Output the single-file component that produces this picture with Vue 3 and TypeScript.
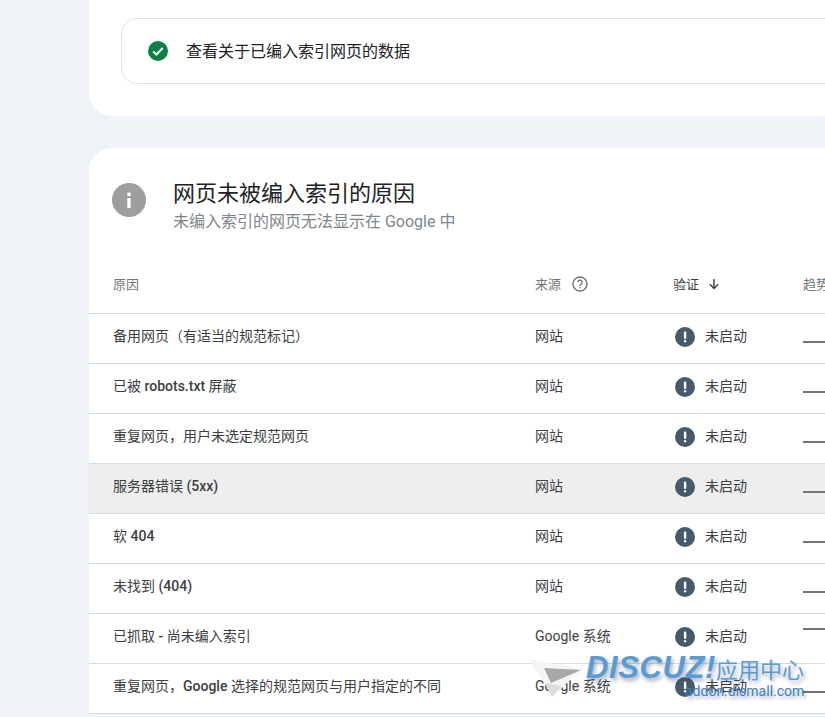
<script setup lang="ts">
interface Row {
  reason: string
  source: string
  trendTop: number
  hover?: boolean
}
const rows: Row[] = [
  { reason: '备用网页（有适当的规范标记）', source: '网站', trendTop: 27 },
  { reason: '已被 robots.txt 屏蔽', source: '网站', trendTop: 27 },
  { reason: '重复网页，用户未选定规范网页', source: '网站', trendTop: 27 },
  { reason: '服务器错误 (5xx)', source: '网站', trendTop: 27, hover: true },
  { reason: '软 404', source: '网站', trendTop: 27 },
  { reason: '未找到 (404)', source: '网站', trendTop: 27 },
  { reason: '已抓取 - 尚未编入索引', source: 'Google 系统', trendTop: 14 },
  { reason: '重复网页，Google 选择的规范网页与用户指定的不同', source: 'Google 系统', trendTop: 27 },
]

/* Latin runs are set in medium weight, CJK runs stay regular. */
function segments(text: string): { text: string; latin: boolean }[] {
  return (text.match(/[\x20-\x7e]+|[^\x20-\x7e]+/g) ?? []).map((part) => ({
    text: part,
    latin: /^[\x20-\x7e]/.test(part),
  }))
}
</script>

<template>
  <div class="page">
    <main class="content">
      <section class="card top-card">
        <div class="link-box">
          <svg class="check" viewBox="0 0 20 20" width="20" height="20">
            <circle cx="10" cy="10" r="10" fill="#0b8043" />
            <path d="M5.2 10.4l3.2 3.1 6.4-6.6" fill="none" stroke="#fff" stroke-width="2.1" />
          </svg>
          <span class="link-text">查看关于已编入索引网页的数据</span>
        </div>
      </section>

      <section class="card table-card">
        <header class="head">
          <svg class="info" viewBox="0 0 34 34" width="34" height="34">
            <circle cx="17" cy="17" r="17" fill="#9e9e9e" />
            <rect x="15.3" y="15" width="3.4" height="10" fill="#fff" />
            <rect x="15.3" y="9.6" width="3.4" height="3.4" fill="#fff" />
          </svg>
          <div class="head-text">
            <h2>网页未被编入索引的原因</h2>
            <p>未编入索引的网页无法显示在 Google 中</p>
          </div>
        </header>

        <div class="row header-row">
          <span class="col-label">原因</span>
          <span class="col-label with-icon">
            来源
            <svg class="head-icon" viewBox="0 0 18 18" width="18" height="18">
              <circle cx="9" cy="9" r="7" fill="none" stroke="#757575" stroke-width="1.4" />
              <path d="M6.8 7.3a2.2 2.2 0 1 1 3.4 1.8c-.8.5-1.2.9-1.2 1.8" fill="none" stroke="#757575" stroke-width="1.3" />
              <rect x="8.3" y="11.9" width="1.4" height="1.4" fill="#757575" />
            </svg>
          </span>
          <span class="col-label sorted">
            验证
            <svg class="head-icon" viewBox="0 0 12 12" width="12" height="12">
              <path d="M6 1v9.2M1.8 6.2L6 10.4l4.2-4.2" fill="none" stroke="#3c4043" stroke-width="1.4" />
            </svg>
          </span>
          <span class="col-label">趋势</span>
        </div>

        <div v-for="row in rows" :key="row.reason" class="row" :class="{ hover: row.hover }">
          <span class="cell-text">
            <span v-for="(seg, i) in segments(row.reason)" :key="i" :class="{ latin: seg.latin }">{{ seg.text }}</span>
          </span>
          <span class="cell-text">{{ row.source }}</span>
          <span class="status">
            <svg viewBox="0 0 20 20" width="20" height="20">
              <circle cx="10" cy="10" r="10" fill="#455a6b" />
              <rect x="8.9" y="4.6" width="2.4" height="7.4" rx="1" fill="#fff" />
              <rect x="8.9" y="13.1" width="2.4" height="2.4" rx="1.1" fill="#fff" />
            </svg>
            <span class="status-text">未启动</span>
          </span>
          <span class="trend" :style="{ marginTop: row.trendTop + 'px' }"></span>
        </div>
      </section>
    </main>

    <div class="watermark">
      <svg class="plane" viewBox="0 0 56 46" width="56" height="46">
        <path d="M0 0L54 10 24 38 17 24Z" fill="#f4f4f4" />
        <path d="M16 9l37 2-30 13z" fill="#8f8f8f" opacity=".75" />
        <path d="M17 24l7 14 10-11z" fill="#dcdcdc" />
      </svg>
      <div class="mark-title"><b>DISCUZ!</b><span>应用中心</span></div>
      <div class="mark-url">addon.dismall.com</div>
    </div>
  </div>
</template>

<style>
html,
body {
  margin: 0;
  background: #eff3f8;
}
</style>

<style scoped>
.page {
  position: relative;
  width: 825px;
  height: 717px;
  overflow: hidden;
  background: #eff3f8;
  font-family: Roboto, "Noto Sans CJK SC", sans-serif;
  color: #3c4043;
}
.content {
  width: 900px;
  margin-left: 89px;
  display: flex;
  flex-direction: column;
  gap: 32px;
}
.card {
  background: #fff;
}
.top-card {
  height: 116px;
  padding: 18px 0 0 32px;
  box-sizing: border-box;
  border-radius: 0 0 24px 24px;
}
.link-box {
  height: 66px;
  box-sizing: border-box;
  border: 1px solid #dfe1e5;
  border-radius: 16px;
  display: flex;
  align-items: center;
  padding-left: 26px;
  gap: 18px;
}
.link-text {
  font-size: 16px;
  color: #202124;
  margin-bottom: 2px;
}
.table-card {
  border-radius: 24px 24px 0 0;
  padding-top: 31px;
}
.head {
  display: flex;
  align-items: flex-start;
  gap: 27px;
  padding-left: 23px;
  height: 54px;
}
.info {
  flex: none;
  margin-top: 4px;
}
.head-text h2 {
  margin: 0;
  font-size: 22px;
  font-weight: 400;
  line-height: 30px;
  color: #202124;
}
.head-text p {
  margin: 1px 0 0;
  font-size: 16px;
  line-height: 24px;
  color: #80868b;
}
.row {
  display: grid;
  grid-template-columns: 422px 138px 130px 1fr;
  align-items: center;
  height: 50px;
  box-sizing: border-box;
  padding-left: 24px;
  border-bottom: 1px solid #dadce0;
  font-size: 14px;
  font-weight: 400;
}
.row.hover {
  background: #eeeeee;
}
.header-row {
  height: 81px;
  padding-top: 20px;
  font-size: 13px;
}
.col-label {
  color: #757575;
  display: flex;
  align-items: center;
}
.with-icon {
  gap: 10px;
}
.sorted {
  color: #3c4043;
  gap: 9px;
}
.head-icon {
  margin-top: 2px;
}
.cell-text {
  color: #3c4043;
  margin-bottom: 8px;
}
.latin {
  font-weight: 500;
}
.status {
  display: flex;
  align-items: center;
  gap: 10px;
  padding-left: 2px;
  margin-bottom: 3px;
}
.status-text {
  margin-bottom: 5px;
}
.trend {
  align-self: start;
  display: block;
  height: 2px;
  background: #757575;
}
.watermark {
  position: absolute;
  left: 528px;
  top: 652px;
  width: 290px;
  height: 60px;
}
.plane {
  position: absolute;
  left: 0;
  top: 7px;
}
.mark-title {
  position: absolute;
  left: 58px;
  top: -2px;
  display: flex;
  align-items: center;
  white-space: nowrap;
  color: #5b9bd5;
  text-shadow: 2px 3px 4px rgba(50, 70, 110, 0.45);
}
.mark-title b {
  font-family: "Liberation Sans", sans-serif;
  font-size: 31px;
  font-style: italic;
  font-weight: 700;
  letter-spacing: 0.6px;
}
.mark-title span {
  margin-left: 0;
  font-size: 22px;
  font-weight: 400;
}
.mark-url {
  position: absolute;
  left: 157px;
  top: 31px;
  white-space: nowrap;
  font-size: 14px;
  color: #3d7fc4;
  text-shadow: 2px 3px 3px rgba(50, 70, 110, 0.4);
}
</style>
